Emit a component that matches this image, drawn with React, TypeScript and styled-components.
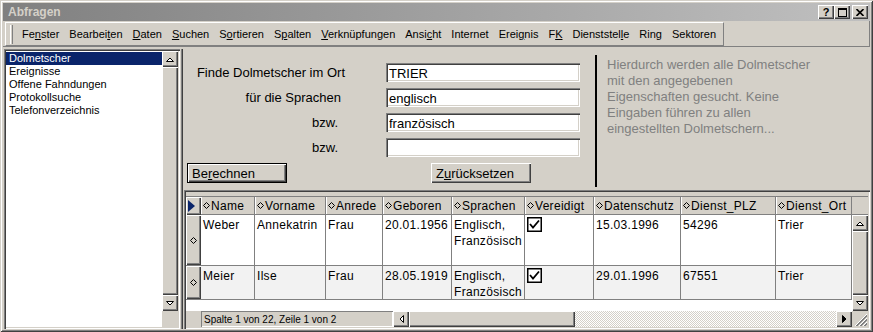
import React from 'react';
import styled, { createGlobalStyle, css } from 'styled-components';

const FACE = '#d4d0c8';
const SHADOW = '#808080';
const DARK = '#404040';
const FONT = '"Liberation Sans", Arial, sans-serif';

const raised = css`
  box-shadow: inset 1px 1px 0 #fff, inset -1px -1px 0 ${DARK}, inset -2px -2px 0 ${SHADOW};
`;

const sunken = css`
  box-shadow: inset 1px 1px 0 ${SHADOW}, inset 2px 2px 0 ${DARK}, inset -1px -1px 0 #fff,
    inset -2px -2px 0 ${FACE};
`;

const GlobalStyle = createGlobalStyle`
  html, body { margin: 0; padding: 0; background: ${FACE}; }
  body { font-family: ${FONT}; }
`;

const MENU = [
  'Fe&nster',
  'Bearbei&ten',
  '&Daten',
  '&Suchen',
  'S&ortieren',
  'S&palten',
  '&Verknüpfungen',
  'Ansi&cht',
  'Internet',
  'Erei&gnis',
  'F&K',
  'Dienststel&le',
  'Ring',
  'Sektoren'
];

const QUERIES = ['Dolmetscher', 'Ereignisse', 'Offene Fahndungen', 'Protokollsuche', 'Telefonverzeichnis'];

const FIELDS = [
  { label: 'Finde Dolmetscher im Ort', value: 'TRIER', inset: 0 },
  { label: 'für die Sprachen', value: 'englisch', inset: 4 },
  { label: 'bzw.', value: 'französisch', inset: 7 },
  { label: 'bzw.', value: '', inset: 7 }
];

const COLUMNS = [
  { key: 'name', title: 'Name', width: 54 },
  { key: 'vorname', title: 'Vorname', width: 71 },
  { key: 'anrede', title: 'Anrede', width: 57 },
  { key: 'geboren', title: 'Geboren', width: 69 },
  { key: 'sprachen', title: 'Sprachen', width: 73 },
  { key: 'vereidigt', title: 'Vereidigt', width: 69 },
  { key: 'datenschutz', title: 'Datenschutz', width: 87 },
  { key: 'plz', title: 'Dienst_PLZ', width: 95 },
  { key: 'ort', title: 'Dienst_Ort', width: 76 }
];

type Record = { [key: string]: string | boolean | number };

const RECORDS: Record[] = [
  {
    name: 'Weber',
    vorname: 'Annekatrin',
    anrede: 'Frau',
    geboren: '20.01.1956',
    sprachen: 'Englisch, Französisch',
    vereidigt: true,
    datenschutz: '15.03.1996',
    plz: '54296',
    ort: 'Trier',
    height: 51
  },
  {
    name: 'Meier',
    vorname: 'Ilse',
    anrede: 'Frau',
    geboren: '28.05.1919',
    sprachen: 'Englisch, Französisch',
    vereidigt: true,
    datenschutz: '29.01.1996',
    plz: '67551',
    ort: 'Trier',
    height: 34
  }
];

const GRID_COLS = `15px ${COLUMNS.map((c) => `${c.width}px`).join(' ')}`;

// "&" marks the access key letter
const AccessLabel: React.FC<{ text: string }> = ({ text }) => {
  const i = text.indexOf('&');
  if (i < 0) return <>{text}</>;
  return (
    <>
      {text.slice(0, i)}
      <u>{text[i + 1]}</u>
      {text.slice(i + 2)}
    </>
  );
};

const Diamond = () => (
  <DiamondIcon width="7" height="7" viewBox="0 0 7 7">
    <path d="M3.5 0.5 L6.5 3.5 L3.5 6.5 L0.5 3.5 Z" fill="none" stroke="#000" strokeWidth="1" />
  </DiamondIcon>
);

const Arrow: React.FC<{ dir: 'up' | 'down' | 'left' | 'right'; solid?: boolean }> = ({ dir, solid }) => {
  const pts = {
    up: '0.5,4.5 4,1 7.5,4.5',
    down: '0.5,0.5 4,4 7.5,0.5',
    left: '4.5,0.5 1,4 4.5,7.5',
    right: '0.5,0.5 4,4 0.5,7.5'
  }[dir];
  const vertical = dir === 'up' || dir === 'down';
  return (
    <svg width={vertical ? 8 : 5} height={vertical ? 5 : 8} viewBox={vertical ? '0 0 8 5' : '0 0 5 8'}>
      <polygon points={pts} fill={solid ? '#000' : '#fff'} stroke="#000" strokeWidth="1" />
    </svg>
  );
};

const Check = () => (
  <svg width="15" height="15" viewBox="0 0 15 15">
    <rect x="0.75" y="0.75" width="13.5" height="13.5" fill="#fff" stroke="#000" strokeWidth="1.5" />
    <path d="M3 7 L6 10.5 L12 3.5" fill="none" stroke="#000" strokeWidth="1.8" />
  </svg>
);

export default function App() {
  return (
    <>
      <GlobalStyle />
      <Window>
        <TitleBar>
          <Title>Abfragen</Title>
          <CaptionButtons>
            <CaptionButton>?</CaptionButton>
            <CaptionButton>
              <svg width="9" height="9" viewBox="0 0 9 9">
                <rect x="0.5" y="0.5" width="8" height="8" fill="none" stroke="#000" />
                <line x1="0" y1="1.5" x2="9" y2="1.5" stroke="#000" />
              </svg>
            </CaptionButton>
            <CaptionButton $gap>
              <svg width="8" height="7" viewBox="0 0 8 7">
                <path d="M0.5 0 L7.5 7 M7.5 0 L0.5 7" stroke="#000" strokeWidth="1.6" />
              </svg>
            </CaptionButton>
          </CaptionButtons>
        </TitleBar>

        <MenuBar>
          <MenuBand>
            <Grip />
            {MENU.map((m) => (
              <MenuItem key={m}>
                <AccessLabel text={m} />
              </MenuItem>
            ))}
          </MenuBand>
        </MenuBar>

        <Body>
          <ListPane>
            <QueryList>
              {QUERIES.map((q, i) => (
                <QueryItem key={q} $selected={i === 0}>
                  {q}
                </QueryItem>
              ))}
            </QueryList>
            <ListScrollColumn>
              <ScrollBar>
                <ScrollButton>
                  <Arrow dir="up" />
                </ScrollButton>
                <ScrollThumb />
                <ScrollButton>
                  <Arrow dir="down" />
                </ScrollButton>
              </ScrollBar>
              <ScrollFiller />
            </ListScrollColumn>
          </ListPane>

          <Splitter />

          <RightPane>
            <FormArea>
              <Fields>
                {FIELDS.map((f, i) => (
                  <FieldRow key={i}>
                    <FieldLabel $inset={f.inset}>{f.label}</FieldLabel>
                    <TextInput value={f.value} readOnly />
                  </FieldRow>
                ))}
                <ButtonRow>
                  <FormButton $default>
                    Be<u>r</u>echnen
                  </FormButton>
                  <FormButton>
                    Z<u>u</u>rücksetzen
                  </FormButton>
                </ButtonRow>
              </Fields>
              <Divider />
              <Hint>
                Hierdurch werden alle Dolmetscher
                <br />
                mit den angegebenen
                <br />
                Eigenschaften gesucht. Keine
                <br />
                Eingaben führen zu allen
                <br />
                eingestellten Dolmetschern...
              </Hint>
            </FormArea>

            <DataSheet>
              <HeaderRow>
                <HeaderSelector>
                  <svg width="7" height="12" viewBox="0 0 7 12">
                    <polygon points="0,0 7,6 0,12" fill="#0a246a" />
                  </svg>
                </HeaderSelector>
                {COLUMNS.map((c) => (
                  <HeaderCell key={c.key}>
                    <Diamond />
                    {c.title}
                  </HeaderCell>
                ))}
                <HeaderFiller />
              </HeaderRow>

              <SheetMiddle>
                <Rows>
                  {RECORDS.map((r, i) => (
                    <DataRow key={i} $odd={i % 2 === 1} style={{ height: r.height as number }}>
                      <RowSelector>
                        <Diamond />
                      </RowSelector>
                      {COLUMNS.map((c) => {
                        const v = r[c.key];
                        if (typeof v === 'boolean') {
                          return (
                            <Cell key={c.key}>
                              <CheckWrap>{v && <Check />}</CheckWrap>
                            </Cell>
                          );
                        }
                        const parts = String(v).split(', ');
                        return (
                          <Cell key={c.key}>
                            {parts.map((p, j) => (
                              <React.Fragment key={j}>
                                {p}
                                {j < parts.length - 1 && (
                                  <>
                                    ,<br />
                                  </>
                                )}
                              </React.Fragment>
                            ))}
                          </Cell>
                        );
                      })}
                    </DataRow>
                  ))}
                </Rows>
                <SheetScroll>
                  <ScrollButton>
                    <Arrow dir="up" />
                  </ScrollButton>
                  <ScrollThumb />
                  <ScrollButton>
                    <Arrow dir="down" />
                  </ScrollButton>
                </SheetScroll>
              </SheetMiddle>

              <StatusRow>
                <StatusStub />
                <StatusText>Spalte 1 von 22, Zeile 1 von 2</StatusText>
                <HScroll>
                  <HScrollButton>
                    <Arrow dir="left" />
                  </HScrollButton>
                  <HThumb />
                  <HTrack />
                  <HScrollButton>
                    <Arrow dir="right" solid />
                  </HScrollButton>
                </HScroll>
                <SizeGrip>
                  <svg width="16" height="16" viewBox="0 0 16 16">
                    <path d="M15 3 L3 15 M15 7 L7 15 M15 11 L11 15" stroke="#fff" strokeWidth="1" />
                    <path d="M15 4 L4 15 M15 5 L5 15 M15 8 L8 15 M15 9 L9 15 M15 12 L12 15 M15 13 L13 15" stroke={SHADOW} strokeWidth="1" />
                  </svg>
                </SizeGrip>
              </StatusRow>
            </DataSheet>
          </RightPane>
        </Body>
      </Window>
    </>
  );
}

const Window = styled.div`
  width: 873px;
  height: 332px;
  box-sizing: border-box;
  padding: 3px;
  display: flex;
  flex-direction: column;
  overflow: hidden;
  background: ${FACE};
  font-family: ${FONT};
  color: #000;
  box-shadow: inset 1px 1px 0 ${FACE}, inset -1px -1px 0 ${DARK}, inset 2px 2px 0 #fff,
    inset -2px -2px 0 ${SHADOW};
`;

const TitleBar = styled.div`
  height: 18px;
  flex-shrink: 0;
  display: flex;
  align-items: center;
  justify-content: space-between;
  padding: 0 2px 0 5px;
  background: linear-gradient(to right, #808080, #c0c0c0);
`;

const Title = styled.span`
  font-size: 12px;
  font-weight: bold;
  color: ${FACE};
`;

const CaptionButtons = styled.div`
  display: flex;
`;

const CaptionButton = styled.div<{ $gap?: boolean }>`
  width: 16px;
  height: 14px;
  margin-left: ${(p) => (p.$gap ? 2 : 0)}px;
  display: flex;
  align-items: center;
  justify-content: center;
  background: ${FACE};
  font-size: 11px;
  font-weight: bold;
  ${raised}
`;

const MenuBar = styled.div`
  height: 26px;
  flex-shrink: 0;
  box-sizing: border-box;
  padding: 1px 0 1px 2px;
  display: flex;
  box-shadow: inset 0 -1px 0 ${SHADOW}, inset -1px 0 0 ${SHADOW};
`;

const MenuBand = styled.div`
  display: flex;
  align-items: center;
  padding-left: 4px;
  padding-right: 2px;
  border-left: 1px solid #fff;
  border-top: 1px solid #fff;
  border-right: 1px solid ${SHADOW};
  border-bottom: 1px solid ${SHADOW};
`;

const Grip = styled.div`
  width: 1px;
  height: 19px;
  margin-right: 4px;
  border-left: 1px solid #fff;
  border-right: 1px solid ${SHADOW};
`;

const MenuItem = styled.span`
  padding: 0 5px;
  font-size: 11px;
  white-space: nowrap;
`;

const Body = styled.div`
  flex: 1;
  min-height: 0;
  display: flex;
  padding: 2px 0 0 1px;
`;

const ListPane = styled.div`
  width: 176px;
  flex-shrink: 0;
  box-sizing: border-box;
  padding: 2px;
  display: flex;
  background: #fff;
  ${sunken}
`;

const QueryList = styled.ul`
  flex: 1;
  margin: 0;
  padding: 1px 0 0 0;
  list-style: none;
  font-size: 11px;
`;

const QueryItem = styled.li<{ $selected?: boolean }>`
  height: 13px;
  line-height: 13px;
  padding-left: 3px;
  background: ${(p) => (p.$selected ? '#0a246a' : 'transparent')};
  color: ${(p) => (p.$selected ? '#fff' : '#000')};
`;

const ListScrollColumn = styled.div`
  width: 16px;
  display: flex;
  flex-direction: column;
  background: ${FACE};
`;

const ScrollBar = styled.div`
  flex: 1;
  display: flex;
  flex-direction: column;
`;

const ScrollFiller = styled.div`
  height: 16px;
`;

const ScrollButton = styled.div`
  height: 16px;
  flex-shrink: 0;
  display: flex;
  align-items: center;
  justify-content: center;
  background: ${FACE};
  ${raised}
`;

const ScrollThumb = styled.div`
  flex: 1;
  background: ${FACE};
  ${raised}
`;

const Splitter = styled.div`
  width: 4px;
  flex-shrink: 0;
  background: linear-gradient(to right, ${FACE} 0 1px, ${SHADOW} 1px 2px, ${DARK} 2px 3px, ${FACE} 3px);
`;

const RightPane = styled.div`
  flex: 1;
  min-width: 0;
  display: flex;
  flex-direction: column;
`;

const FormArea = styled.div`
  height: 141px;
  flex-shrink: 0;
  display: flex;
`;

const Fields = styled.div`
  width: 411px;
  box-sizing: border-box;
  padding-top: 14px;
  display: flex;
  flex-direction: column;
  gap: 6px;
`;

const FieldRow = styled.div`
  display: grid;
  grid-template-columns: 161px 194px;
  column-gap: 41px;
  align-items: center;
`;

const FieldLabel = styled.span<{ $inset: number }>`
  text-align: right;
  padding-right: ${(p) => p.$inset}px;
  font-size: 13px;
  white-space: nowrap;
`;

const TextInput = styled.input`
  width: 194px;
  height: 19px;
  box-sizing: border-box;
  margin: 0;
  border: 0;
  padding: 1px 3px 0;
  outline: none;
  background: #fff;
  font: 13px ${FONT};
  color: #000;
  ${sunken}
`;

const ButtonRow = styled.div`
  display: flex;
  gap: 144px;
  padding-left: 3px;
`;

const FormButton = styled.div<{ $default?: boolean }>`
  width: 100px;
  height: 20px;
  box-sizing: border-box;
  display: flex;
  align-items: center;
  padding-left: 5px;
  font-size: 13px;
  background: ${FACE};
  ${(p) =>
    p.$default
      ? css`
          box-shadow: inset 0 0 0 1px #000, inset 2px 2px 0 #fff, inset -2px -2px 0 ${DARK},
            inset -3px -3px 0 ${SHADOW};
        `
      : raised}
`;

const Divider = styled.div`
  width: 2px;
  height: 132px;
  margin-top: 6px;
  background: #000;
  flex-shrink: 0;
`;

const Hint = styled.p`
  margin: 0;
  padding: 8px 0 0 10px;
  font-size: 13px;
  line-height: 16px;
  color: ${SHADOW};
  white-space: nowrap;
`;

const DataSheet = styled.div`
  flex: 1;
  min-height: 0;
  box-sizing: border-box;
  padding: 6px 2px 2px 2px;
  display: flex;
  flex-direction: column;
  background: ${FACE};
  ${sunken}
`;

const HeaderRow = styled.div`
  height: 19px;
  flex-shrink: 0;
  display: grid;
  grid-template-columns: ${GRID_COLS} 16px;
  border-top: 1px solid ${SHADOW};
  box-sizing: border-box;
`;

const HeaderSelector = styled.div`
  display: flex;
  align-items: center;
  padding-left: 2px;
  ${raised}
`;

const HeaderCell = styled.div`
  display: flex;
  align-items: center;
  gap: 1px;
  padding-left: 2px;
  font-size: 12px;
  letter-spacing: 0.3px;
  white-space: nowrap;
  overflow: hidden;
  border-right: 1px solid ${SHADOW};
  border-bottom: 1px solid ${SHADOW};
  box-shadow: inset 1px 0 0 #fff;
`;

const HeaderFiller = styled.div`
  border-bottom: 1px solid ${SHADOW};
`;

const DiamondIcon = styled.svg`
  flex-shrink: 0;
`;

const SheetMiddle = styled.div`
  flex: 1;
  min-height: 0;
  display: flex;
`;

const Rows = styled.div`
  flex: 1;
  background: #fff;
`;

const DataRow = styled.div<{ $odd?: boolean }>`
  display: grid;
  grid-template-columns: ${GRID_COLS};
  box-sizing: border-box;
  background: ${(p) => (p.$odd ? '#f2f2f2' : '#fff')};
  border-bottom: 1px solid ${SHADOW};
`;

const RowSelector = styled.div`
  display: flex;
  align-items: center;
  justify-content: center;
  background: ${FACE};
  ${raised}
`;

const Cell = styled.div`
  padding: 2px 0 0 2px;
  font-size: 12px;
  letter-spacing: 0.3px;
  line-height: 16px;
  border-right: 1px solid ${SHADOW};
  white-space: nowrap;
  overflow: hidden;
`;

const CheckWrap = styled.div`
  padding-top: 0;
  height: 15px;
`;

const SheetScroll = styled.div`
  width: 16px;
  display: flex;
  flex-direction: column;
  background: ${FACE};
`;

const StatusRow = styled.div`
  height: 16px;
  flex-shrink: 0;
  display: flex;
`;

const StatusStub = styled.div`
  width: 15px;
  background: ${FACE};
`;

const StatusText = styled.div`
  width: 192px;
  box-sizing: border-box;
  padding-left: 3px;
  display: flex;
  align-items: center;
  font-size: 10px;
  white-space: nowrap;
  box-shadow: inset 1px 1px 0 ${SHADOW}, inset -1px -1px 0 #fff;
`;

const HScroll = styled.div`
  flex: 1;
  display: flex;
`;

const HScrollButton = styled.div`
  width: 16px;
  display: flex;
  align-items: center;
  justify-content: center;
  ${raised}
`;

const HThumb = styled.div`
  width: 166px;
  ${raised}
`;

const HTrack = styled.div`
  flex: 1;
  background: repeating-conic-gradient(#fff 0 25%, ${FACE} 0 50%) 0 0 / 2px 2px;
`;

const SizeGrip = styled.div`
  width: 16px;
  display: flex;
`;
